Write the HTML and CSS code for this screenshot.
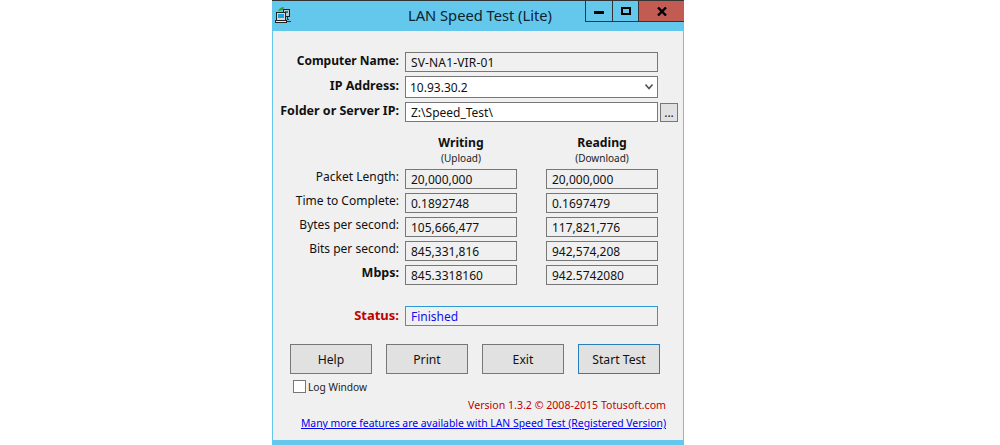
FILE: index.html
```html
<!DOCTYPE html>
<html lang="en">
<head>
<meta charset="utf-8">
<title>LAN Speed Test (Lite)</title>
<link rel="stylesheet" href="styles.css">
</head>
<body>
<div class="window">
  <div class="titlebar">
    <svg class="app-icon" width="18" height="18" viewBox="0 0 18 18">
      <rect x="9.5" y="3.5" width="6" height="7" fill="#c8c8c8" stroke="#222"/>
      <rect x="11" y="5" width="3" height="2" fill="#1a7fa8"/>
      <rect x="2.5" y="6.5" width="9" height="8" fill="#d8d8d8" stroke="#222"/>
      <rect x="4" y="8" width="6" height="4" fill="#16a5e0"/>
      <rect x="1.5" y="14.5" width="11" height="2" fill="#eee" stroke="#222"/>
      <path d="M4 5 Q6 1 10 1 L9 4 Z" fill="#2f9e2f"/>
      <path d="M13 11h1v2h1v1h-2zM13 15h4v1h-4z" fill="#123a6a"/>
    </svg>
    <div class="title">LAN Speed Test (Lite)</div>
    <div class="controls">
      <div class="ctl ctl-min"><span class="min-glyph"></span></div>
      <div class="ctl ctl-max"><span class="max-glyph"></span></div>
      <div class="ctl ctl-close">
        <svg width="10" height="9" viewBox="0 0 10 9"><path d="M1 0.5 L9 8.5 M9 0.5 L1 8.5" stroke="#000" stroke-width="2.4" fill="none"/></svg>
      </div>
    </div>
  </div>
  <div class="client">
    <div class="top-form">
      <div class="row row-name">
        <label class="lbl bold lbl-name">Computer Name:</label>
        <div class="field wide">SV-NA1-VIR-01</div>
      </div>
      <div class="row row-ip">
        <label class="lbl bold">IP Address:</label>
        <div class="select wide">
          <span>10.93.30.2</span>
          <svg width="8" height="6" viewBox="0 0 8 6"><path d="M0.5 0.5 L4 4.5 L7.5 0.5" stroke="#555" stroke-width="1.6" fill="none"/></svg>
        </div>
      </div>
      <div class="row row-folder">
        <label class="lbl bold">Folder or Server IP:</label>
        <div class="input wide">Z:\Speed_Test\</div>
        <div class="browse">...</div>
      </div>
    </div>

    <div class="heads">
      <div class="head"><div class="bold head-main">Writing</div><div class="head-sub">(Upload)</div></div>
      <div class="head"><div class="bold head-main">Reading</div><div class="head-sub">(Download)</div></div>
    </div>

    <div class="results">
      <label class="lbl">Packet Length:</label><div class="field">20,000,000</div><div class="field">20,000,000</div>
      <label class="lbl">Time to Complete:</label><div class="field">0.1892748</div><div class="field">0.1697479</div>
      <label class="lbl">Bytes per second:</label><div class="field">105,666,477</div><div class="field">117,821,776</div>
      <label class="lbl">Bits per second:</label><div class="field">845,331,816</div><div class="field">942,574,208</div>
      <label class="lbl bold">Mbps:</label><div class="field">845.3318160</div><div class="field">942.5742080</div>
    </div>

    <div class="row row-status">
      <label class="lbl bold status-lbl">Status:</label>
      <div class="field wide status-val">Finished</div>
    </div>

    <div class="buttons">
      <div class="btn">Help</div>
      <div class="btn">Print</div>
      <div class="btn">Exit</div>
      <div class="btn btn-default">Start Test</div>
    </div>

    <div class="log"><span class="check"></span><span>Log Window</span></div>
    <div class="version">Version 1.3.2 © 2008-2015 Totusoft.com</div>
    <a class="promo" href="#">Many more features are available with LAN Speed Test (Registered Version)</a>
  </div>
</div>
</body>
</html>
```
FILE: styles.css
```css
* { box-sizing: border-box; }
html, body { margin: 0; padding: 0; height: 445px; overflow: hidden; background: #fff; }
body { font-family: "Noto Sans", "Liberation Sans", sans-serif; font-size: 12px; color: #111; }

.window {
  width: 412px; height: 445px; margin-left: 272px;
  background: #63c8ec; border-top: 1px solid #333;
  display: flex; flex-direction: column;
}
.titlebar { height: 30px; display: flex; align-items: flex-start; position: relative; flex: none; }
.app-icon { margin: 5px 0 0 2px; }
.title {
  position: absolute; left: 0; right: 0; top: 5px; text-align: center;
  font-size: 14.7px; line-height: 18px; color: #10222c; padding-left: 4px;
}
.controls { margin-left: auto; display: flex; height: 20px; position: relative; }
.ctl { height: 21px; display: flex; align-items: center; justify-content: center; border-bottom: 1px solid #333; }
.ctl-min { width: 28px; border-left: 1px solid #333; border-right: 1px solid #333; }
.ctl-max { width: 26px; border-right: 1px solid #333; }
.ctl-close { width: 45px; background: #c25b52; }
.min-glyph { width: 10px; height: 3px; background: #000; margin-top: 3px; }
.max-glyph { width: 10px; height: 8px; border: 2px solid #000; }

.client {
  flex: 1; margin: 0 1px 5px 1px; background: #f0f0f0;
  padding-top: 21px; display: flex; flex-direction: column;
  min-height: 0;
}
.bold { font-weight: 700; }
.top-form { display: flex; flex-direction: column; }
.row { display: flex; align-items: center; }
.lbl { width: 126px; text-align: right; font-size: 12px; line-height: 16px; color: #111; white-space: nowrap; }
.lbl.bold { font-size: 12.5px; }
.lbl.lbl-name { font-size: 12px; }
.field, .select, .input {
  height: 20px; border: 1px solid #777; padding-left: 5px; line-height: 20px;
  font-size: 12px; color: #111; white-space: nowrap;
}
.field { background: #f0f0f0; }
.wide { width: 253px; margin-left: 6px; }
.row-name { height: 20px; }
.row-name .field { letter-spacing: 0.15px; }
.row-ip { height: 22px; margin-top: 4px; }
.select {
  height: 22px; background: #fff; padding: 0 4px; line-height: 21px;
  display: flex; align-items: center; justify-content: space-between;
}
.row-folder { height: 20px; margin-top: 4px; }
.input { background: #fff; }
.browse {
  width: 18px; height: 19px; margin-left: 2px; border: 1px solid #777; background: #e1e1e1;
  font-size: 12px; line-height: 17px; text-align: center;
}
.row-ip .lbl, .row-folder .lbl, .row-name .lbl { margin-top: -3px; }

.heads { display: grid; grid-template-columns: 112px 112px; column-gap: 29px; margin: 13px 0 0 132px; }
.head { text-align: center; }
.head-main { font-size: 12.2px; line-height: 16px; }
.head-sub { font-size: 10px; line-height: 14px; color: #222; }

.results {
  display: grid; grid-template-columns: 126px 112px 112px;
  grid-auto-rows: 20px; row-gap: 4px; margin-top: 4px;
  align-items: start;
}
.results .field:nth-child(3n+2) { margin-left: 6px; width: 112px; }
.results .field:nth-child(3n) { margin-left: 35px; width: 112px; }

.row-status { margin-top: 21px; height: 20px; }
.lbl.status-lbl { color: #c00000; margin-top: -3px; font-size: 13px; }
.status-val { border-color: #2a9bd6; color: #1010f0; }

.buttons { display: flex; gap: 14px; margin: 18px 0 0 17px; }
.btn {
  width: 82px; height: 30px; border: 1px solid #777; background: #e1e1e1;
  font-size: 12.2px; line-height: 29px; text-align: center; color: #111;
}
.btn-default { border-color: #2a7db8; }

.log { display: flex; align-items: center; margin: 6px 0 0 20px; height: 13px; font-size: 10.2px; color: #222; }
.check { width: 13px; height: 13px; border: 1px solid #777; background: #fff; margin-right: 2px; flex: none; }
.version {
  font-size: 10.6px; line-height: 15px; color: #c00000; text-align: right;
  margin: 5px 17px 0 0; white-space: nowrap;
}
.promo {
  align-self: flex-end; margin: 3px 17px 0 0; font-size: 10.4px; line-height: 15px;
  color: #0000ee; text-decoration: underline; white-space: nowrap;
}
```
